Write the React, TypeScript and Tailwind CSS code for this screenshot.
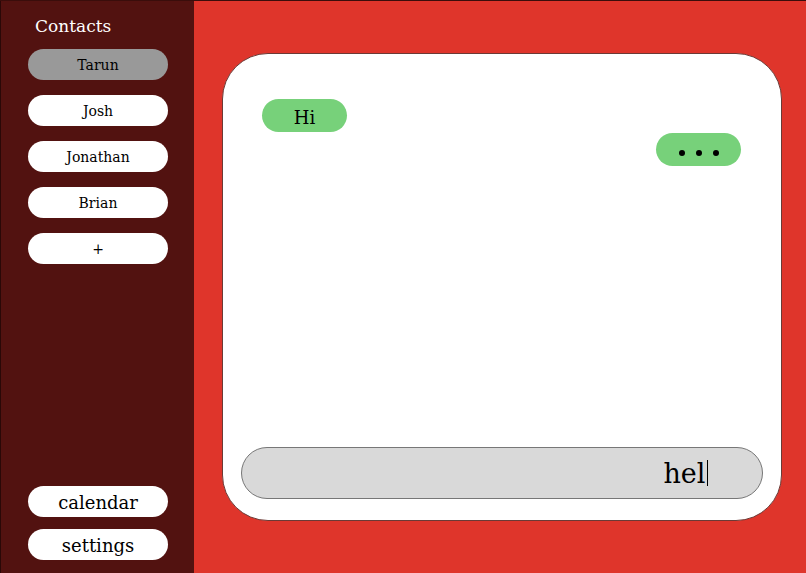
export default function App() {
  const contacts = ['Tarun', 'Josh', 'Jonathan', 'Brian', '+'];
  return (
    <div className="flex h-[573px] w-[806px] overflow-hidden border-t border-[#3a0d0b] bg-[#df352b] font-['DejaVu_Serif',serif]">
      <aside className="flex w-[194px] flex-col border-l border-[#2a0807] bg-[#521210] px-[27px] pb-[13px]">
        <h2 className="ml-[7px] mt-[14px] text-[17px] leading-[22px] text-white">Contacts</h2>
        <div className="mt-[12px] flex flex-col gap-[15px]">
          {contacts.map((c, i) => (
            <button
              key={c}
              className={`h-[31px] w-[140px] rounded-full pt-[1px] text-[14px] text-black ${i === 0 ? 'bg-[#999999]' : 'bg-white'}`}
            >
              {c}
            </button>
          ))}
        </div>
        <div className="mt-auto flex flex-col gap-[12px]">
          <button className="h-[31px] w-[140px] rounded-full bg-white pt-[1px] text-[18px] text-black">calendar</button>
          <button className="h-[31px] w-[140px] rounded-full bg-white pt-[1px] text-[18px] text-black">settings</button>
        </div>
      </aside>
      <main className="flex flex-1 pb-[52px] pl-[28px] pr-[24px] pt-[52px]">
        <div className="flex flex-1 flex-col rounded-[46px] border border-[#6b3a36] bg-white px-[18px] pb-[21px] pt-[45px]">
          <div className="ml-[21px] flex h-[33px] w-[85px] items-center justify-center rounded-full bg-[#77d17a] pt-[3px] text-[18px] text-black">
            Hi
          </div>
          <div className="mr-[22px] mt-[1px] flex h-[33px] w-[85px] items-center justify-center gap-[11px] self-end rounded-full bg-[#77d17a] pt-[6px]">
            <span className="h-[6px] w-[6px] rounded-full bg-black" />
            <span className="h-[6px] w-[6px] rounded-full bg-black" />
            <span className="h-[6px] w-[6px] rounded-full bg-black" />
          </div>
          <div className="mt-auto flex h-[52px] items-center justify-end rounded-full border border-[#777777] bg-[#d9d9d9] pr-[54px]">
            <span className="text-[27px] leading-none text-black">hel</span>
            <span className="ml-[1px] h-[26px] w-[1.5px] bg-black" />
          </div>
        </div>
      </main>
    </div>
  );
}
